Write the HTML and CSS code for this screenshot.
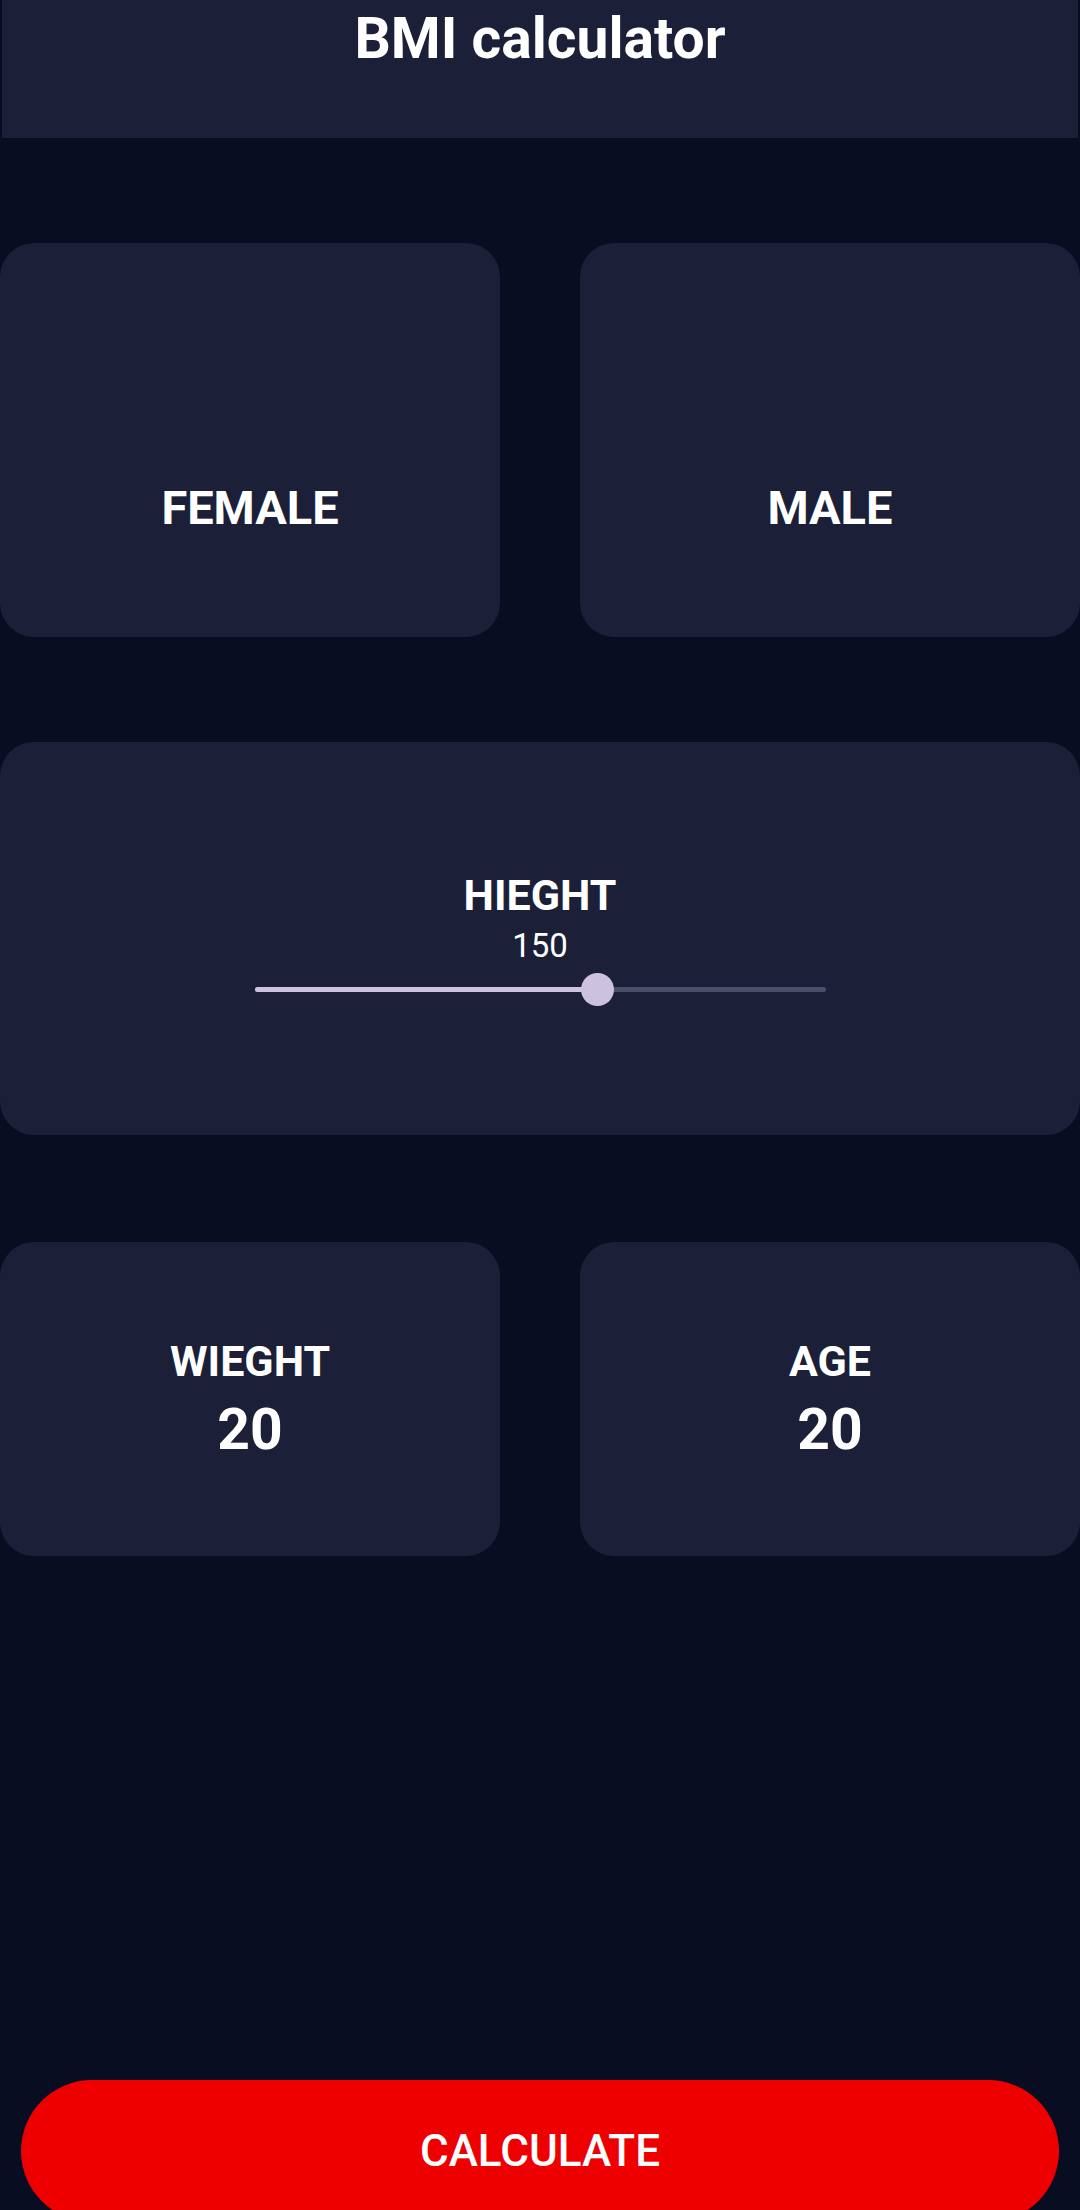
FILE: index.html
```html
<!DOCTYPE html>
<html lang="en">
<head>
<meta charset="utf-8">
<title>BMI calculator</title>
<link rel="stylesheet" href="styles.css">
</head>
<body>
<div class="screen">
  <header class="appbar">
    <h1 class="title">BMI calculator</h1>
  </header>

  <section class="row gender-row">
    <div class="card gender-card"><span class="gender-label">FEMALE</span></div>
    <div class="card gender-card"><span class="gender-label">MALE</span></div>
  </section>

  <section class="card height-card">
    <span class="label">HIEGHT</span>
    <span class="height-value">150</span>
    <div class="slider">
      <div class="track">
        <div class="track-active" style="width: 60%"></div>
        <div class="thumb" style="left: 60%"></div>
      </div>
    </div>
  </section>

  <section class="row stat-row">
    <div class="card stat-card">
      <span class="label">WIEGHT</span>
      <span class="stat-value">20</span>
    </div>
    <div class="card stat-card">
      <span class="label">AGE</span>
      <span class="stat-value">20</span>
    </div>
  </section>

  <button class="calc-btn">CALCULATE</button>
</div>
</body>
</html>
```

FILE: styles.css
```css
html, body {
  margin: 0;
  padding: 0;
  height: 2210px;
  overflow: hidden;
  background: #090d22;
}

.screen {
  display: flex;
  flex-direction: column;
  font-family: Roboto, "Noto Sans", sans-serif;
  color: #ffffff;
}

.appbar {
  height: 138px;
  margin: 0 2px;
  background: #1b1f38;
  display: flex;
  justify-content: center;
}

.title {
  margin: 0;
  padding-top: 10px;
  font-size: 57px;
  line-height: 57px;
  font-weight: 700;
}

.row {
  display: flex;
  gap: 80px;
}

.card {
  background: #1b1f38;
  border-radius: 34px;
}

.gender-row {
  margin-top: 105px;
}

.gender-card {
  flex: 1;
  height: 394px;
  display: flex;
  flex-direction: column;
  align-items: center;
  justify-content: flex-end;
  padding-bottom: 106px;
  box-sizing: border-box;
}

.gender-label {
  font-size: 47px;
  line-height: 47px;
  font-weight: 700;
}

.label {
  font-size: 43px;
  line-height: 43px;
  font-weight: 700;
}

.height-card {
  margin-top: 105px;
  height: 393px;
  box-sizing: border-box;
  padding-top: 132px;
  display: flex;
  flex-direction: column;
  align-items: center;
}

.height-value {
  margin-top: 12px;
  font-size: 33px;
  line-height: 33px;
  font-weight: 400;
}

.slider {
  margin-top: 3px;
  height: 48px;
  width: 571px;
  display: flex;
  align-items: center;
}

.track {
  position: relative;
  width: 100%;
  height: 5px;
  border-radius: 3px;
  background: #4b4f69;
}

.track-active {
  height: 100%;
  border-radius: 3px;
  background: #cfc4e0;
}

.thumb {
  position: absolute;
  top: 50%;
  width: 33px;
  height: 33px;
  margin-left: -16.5px;
  margin-top: -16.5px;
  border-radius: 50%;
  background: #cdc2de;
}

.stat-row {
  margin-top: 107px;
}

.stat-card {
  flex: 1;
  height: 314px;
  display: flex;
  flex-direction: column;
  align-items: center;
  justify-content: center;
}

.stat-value {
  margin-top: 18px;
  font-size: 57px;
  line-height: 57px;
  font-weight: 700;
}

.calc-btn {
  margin: 524px 21px 0;
  height: 142px;
  border: none;
  border-radius: 71px;
  background: #ee0000;
  color: #ffffff;
  font-family: Roboto, "Noto Sans", sans-serif;
  font-size: 44px;
  font-weight: 500;
  padding: 0;
  flex-shrink: 0;
}
```
